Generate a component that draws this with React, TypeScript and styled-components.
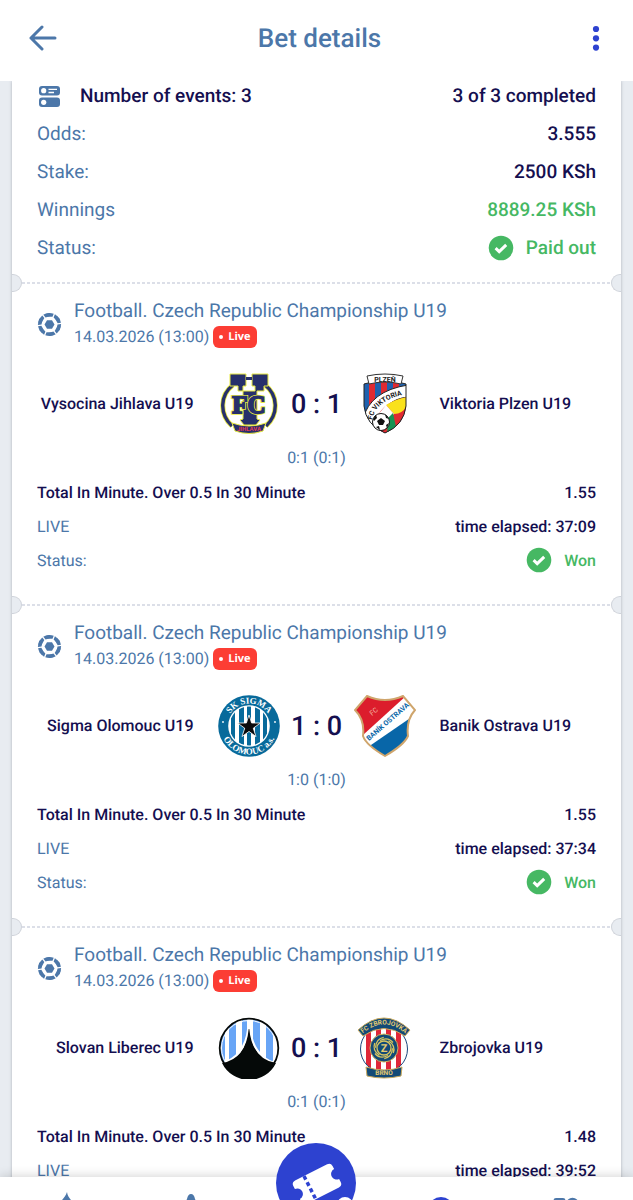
import React from 'react';
import styled, { createGlobalStyle } from 'styled-components';

const GlobalStyle = createGlobalStyle`
  * {
    box-sizing: border-box;
  }

  body {
    margin: 0;
    background: #e8ecf1;
    font-family: Roboto, 'Liberation Sans', sans-serif;
    text-rendering: geometricPrecision;
    color: #150f50;
  }
`;

const Shell = styled.div`
  height: 100vh;
  display: flex;
  flex-direction: column;
  overflow: hidden;
`;

const Header = styled.header`
  flex: 0 0 81px;
  padding: 0 17px 4px 23px;
  display: flex;
  align-items: center;
  justify-content: space-between;
  background: #fff;
`;

const Title = styled.h1`
  margin: 0;
  font-size: 26px;
  line-height: 32px;
  font-weight: 500;
  color: #4c77a9;
`;

const IconButton = styled.button`
  width: 40px;
  height: 40px;
  padding: 0;
  border: 0;
  background: none;
  display: flex;
  align-items: center;
  justify-content: center;
  cursor: pointer;
`;

const Content = styled.main`
  flex: 1 1 0;
  min-height: 0;
  overflow: hidden;
  padding: 0 12px;
`;

const Ticket = styled.article`
  background: #fff;
  box-shadow: 0 0 3px rgba(60, 70, 90, 0.35);
`;

const Summary = styled.dl`
  margin: 0;
  padding: 3px 25px 14px;
  display: grid;
  gap: 14px;
`;

const SummaryRow = styled.div`
  height: 24px;
  display: flex;
  align-items: center;
  justify-content: space-between;
  font-size: 19px;
  line-height: 24px;
`;

const Label = styled.dt<{ $strong?: boolean }>`
  display: flex;
  align-items: center;
  gap: 18px;
  font-weight: ${({ $strong }) => ($strong ? 500 : 400)};
  color: ${({ $strong }) => ($strong ? '#150f50' : '#4c77a9')};
`;

const Value = styled.dd<{ $win?: boolean }>`
  margin: 0;
  display: flex;
  align-items: center;
  gap: 12px;
  font-weight: 500;
  color: ${({ $win }) => ($win ? '#46b863' : '#150f50')};
`;

const Perforation = styled.div`
  height: 18px;
  display: flex;
  align-items: center;
`;

const Notch = styled.span<{ $side: 'left' | 'right' }>`
  width: 10px;
  height: 18px;
  background: #e8ecf1;
  border: 1px solid #cfd3da;
  border-${({ $side }) => $side}: 0;
  border-radius: ${({ $side }) => ($side === 'left' ? '0 9px 9px 0' : '9px 0 0 9px')};
`;

const Dashes = styled.span`
  flex: 1;
  height: 2px;
  background: repeating-linear-gradient(90deg, #dcdfe8 0 3px, transparent 3px 5px);
`;

const Leg = styled.section`
  height: 304px;
  padding: 6px 25px 0;
`;

const LegHead = styled.header`
  display: flex;
  align-items: center;
  gap: 12px;
`;

const League = styled.h2`
  margin: 0;
  font-size: 19px;
  line-height: 25px;
  font-weight: 400;
  color: #4c77a9;
`;

const Kickoff = styled.div`
  height: 27px;
  display: flex;
  align-items: center;
  gap: 4px;
  font-size: 16px;
  color: #4c77a9;
`;

const LiveBadge = styled.span`
  height: 22px;
  padding: 0 6px;
  display: flex;
  align-items: center;
  gap: 5px;
  border-radius: 6px;
  background: #fc3d34;
  color: #fff;
  font: 700 11px/22px 'Open Sans', sans-serif;

  &::before {
    content: '';
    width: 4px;
    height: 4px;
    border-radius: 50%;
    background: #fff;
  }
`;

const Match = styled.div`
  height: 76px;
  margin-top: 16px;
  display: grid;
  grid-template-columns: 1fr 62px 74px 62px 1fr;
  align-items: center;
`;

const Team = styled.strong<{ $home?: boolean }>`
  padding: ${({ $home }) => ($home ? '0 24px 0 0' : '0 0 0 24px')};
  font-size: 16px;
  line-height: 20px;
  font-weight: 500;
  text-align: ${({ $home }) => ($home ? 'right' : 'left')};
`;

const Score = styled.div`
  font-size: 27px;
  line-height: 32px;
  font-weight: 500;
  text-align: center;
`;

const Halves = styled.div`
  margin-top: 6px;
  font-size: 16px;
  line-height: 20px;
  text-align: center;
  color: #4c77a9;
`;

const Details = styled.dl`
  margin: 7px 0 0;
`;

const DetailRow = styled.div`
  height: 34px;
  display: flex;
  align-items: center;
  justify-content: space-between;
  font-size: 16px;
`;

const Nav = styled.nav`
  position: relative;
  flex: 0 0 23px;
  min-height: 0;
  height: 23px;
  padding: 0 5px 0 3px;
  display: grid;
  grid-template-columns: repeat(5, 1fr);
  align-items: start;
  background: #fff;
  box-shadow: 0 0 12px rgba(0, 0, 0, 0.2);
`;

const NavLink = styled.a`
  height: 80px;
  padding-top: 13px;
  display: flex;
  justify-content: center;
`;

const CouponButton = styled.button`
  width: 80px;
  height: 80px;
  margin-top: -34px;
  padding: 0;
  justify-self: center;
  border: 0;
  border-radius: 50%;
  background: #2d42d0;
  cursor: pointer;
`;

const CheckIcon = () => (
  <svg width="26" height="26" viewBox="0 0 26 26" aria-hidden="true">
    <circle cx="13" cy="13" r="12.3" fill="#46b863" />
    <path d="M7.6 13.2l3.6 3.4 7-6.8" fill="none" stroke="#fff" strokeWidth="3" />
  </svg>
);

const EventsIcon = () => (
  <svg width="25" height="24" viewBox="0 0 25 24" aria-hidden="true">
    <rect x="2" y="2" width="21" height="9.5" rx="3" fill="#4c77a9" />
    <rect x="2" y="13.5" width="21" height="9.5" rx="3" fill="#4c77a9" />
    <circle cx="6.7" cy="6.7" r="2.6" fill="#fff" />
    <circle cx="6.7" cy="18.3" r="2.6" fill="#fff" />
    <path d="M11.5 5.3h8.5M11.5 8.5h5.5" stroke="#fff" strokeWidth="1.3" />
  </svg>
);

const spokes = [0, 60, 120, 180, 240, 300];

const FootballIcon = () => (
  <svg width="25" height="25" viewBox="-12.5 -12.5 25 25" fill="#4c77a9" aria-hidden="true">
    <path d="M-2.5-4.3h5L5 0 2.5 4.3h-5L-5 0z" />
    {spokes.map((a) => (
      <g key={a} transform={`rotate(${a})`}>
        <path d="M-4.2-10.8A11.6 11.6 0 0 1 4.2-10.8L3-7.7h-6z" />
        <path d="M5.4-10.2A11.6 11.6 0 0 1 6.1-9.8L10-5.8 7.2-4.1 4.1-6.9z" transform="rotate(0)" />
      </g>
    ))}
  </svg>
);

const Vysocina = () => (
  <svg width="62" height="62" viewBox="0 0 62 62" role="img" aria-label="Vysocina Jihlava">
    <g fill="none">
      <path d="M15 12C2 22 1 41 14 53M47 12c13 10 14 29 1 41" stroke="#e9ea43" strokeWidth="5" />
      <path d="M15 12C2 22 1 41 14 53M47 12c13 10 14 29 1 41" stroke="#27306b" strokeWidth="3.4" />
    </g>
    <g fill="#27306b" stroke="#e9ea43" strokeWidth="1">
      <path d="M12 1h16v12h-3v5h12v-5h-3V1h16v12h-4v5h-7v28l3 1-4 5H26l-4-5 3-1V18h-5v-5h-8z" />
      <path d="M14 50q17 6 34 0l-3 8q-14 5-28 0z" />
    </g>
    <path d="M28 4h6v3h-6z" fill="#27306b" />
    <text x="31" y="40" textAnchor="middle" fontFamily="Liberation Serif, serif" fontWeight="700" fontSize="25" stroke="#e9ea43" strokeWidth="3.4">FC</text>
    <text x="31" y="40" textAnchor="middle" fontFamily="Liberation Serif, serif" fontWeight="700" fontSize="25" fill="#27306b" stroke="#27306b" strokeWidth="1.8" aria-hidden="true">FC</text>
    <text x="31" y="57.5" textAnchor="middle" fontFamily="Roboto, sans-serif" fontWeight="700" fontSize="6" fill="#e23a58">JIHLAVA</text>
  </svg>
);

const Viktoria = () => (
  <svg width="62" height="62" viewBox="0 0 62 62" role="img" aria-label="Viktoria Plzen">
    <defs>
      <clipPath id="vik">
        <path d="M10 11Q31 4 52 11V33Q50 52 31 60 12 52 10 33z" />
      </clipPath>
      <path id="vik-arc" d="M18 47Q22 26 54 21" />
    </defs>
    <g clipPath="url(#vik)">
      <path d="M8 0h46v62H8z" fill="#1f61ae" />
      <path d="M15 0h6v40h-6zM27 0h6v40h-6zM39 0h6v40h-6z" fill="#e02a31" />
      <path d="M9 46Q16 18 54 12v12Q30 26 20 54z" fill="#fff" stroke="#222" />
      <path d="M20 54Q24 29 54 24v38H20z" fill="#e02a31" />
      <path d="M32 32q10-6 22-8 0 16-14 17z" fill="#f9e11b" />
      <path d="M32 32l8 9-7 7-10-5z" fill="#fff" />
      <path d="M34 45l5-5 3 14-9 7z" fill="#179354" />
    </g>
    <path d="M10 11Q31 4 52 11V33Q50 52 31 60 12 52 10 33z" fill="none" stroke="#222" />
    <path d="M13 3Q31-1 49 3l-2 8Q31 7 15 11z" fill="#fff" stroke="#333" />
    <text x="31" y="8.5" textAnchor="middle" fontFamily="Roboto, sans-serif" fontWeight="700" fontSize="7" fill="#222">PLZEŇ</text>
    <text fontFamily="Roboto, sans-serif" fontWeight="700" fontSize="7" fill="#222">
      <textPath href="#vik-arc">FC VIKTORIA</textPath>
    </text>
    <circle cx="27" cy="49" r="8.5" fill="#fff" stroke="#111" />
    <path d="M27 45l4 3-2 4h-4l-2-4zM19 46l3-4 1 3-3 3zM31 41l4 5-3-1zM35 50l-2 5-1-3zM22 54l3-1 1 4z" fill="#111" />
  </svg>
);

const Sigma = () => (
  <svg width="62" height="62" viewBox="0 0 62 62" role="img" aria-label="Sigma Olomouc">
    <defs>
      <path id="sig-top" d="M8.5 31a22.5 22.5 0 0 1 45 0" />
      <path id="sig-bottom" d="M2.5 31a28.5 28.5 0 0 0 57 0" />
      <clipPath id="sig">
        <circle cx="31" cy="31" r="19.5" />
      </clipPath>
    </defs>
    <circle cx="31" cy="31" r="30.8" fill="#086a9b" />
    <circle cx="31" cy="31" r="20.8" fill="#fff" />
    <g clipPath="url(#sig)" fill="#086a9b">
      <path d="M13 10h4v42h-4zM21 10h5v42h-5zM29 10h4v42h-4zM37 10h5v42h-5zM45 10h4v42h-4z" />
    </g>
    <path d="M31 20l2.6 8h8.8l-7.1 5.2 2.7 8.4-7-5.2-7 5.2 2.7-8.4-7.1-5.2h8.8z" fill="#0b0b0d" stroke="#fff" strokeWidth=".8" />
    <g fontFamily="Liberation Serif, serif" fontWeight="700" fontSize="9" fill="#fff" textAnchor="middle">
      <text><textPath href="#sig-top" startOffset="50%">SK SIGMA</textPath></text>
      <text><textPath href="#sig-bottom" startOffset="50%">OLOMOUC a.s.</textPath></text>
    </g>
    <circle cx="5" cy="27" r=".9" fill="#fff" />
    <circle cx="57" cy="27" r=".9" fill="#fff" />
  </svg>
);

const Banik = () => (
  <svg width="62" height="62" viewBox="0 0 62 62" role="img" aria-label="Banik Ostrava">
    <defs>
      <clipPath id="ban">
        <path d="M13 1Q31 9 49 1L61 15Q52 25 54 41 50 50 31 61 12 50 9 41 11 25 1 15z" />
      </clipPath>
    </defs>
    <g clipPath="url(#ban)">
      <path d="M0 0h62v62H0z" fill="#fff" />
      <path d="M0 0h53L9 40H0z" fill="#dc1d2c" />
      <path d="M62 19v43H0l17-12z" fill="#0866a8" />
    </g>
    <path d="M13 1Q31 9 49 1L61 15Q52 25 54 41 50 50 31 61 12 50 9 41 11 25 1 15z" fill="none" stroke="#cfa56c" strokeWidth="2" />
    <text transform="translate(18 21) rotate(-40)" fontFamily="Roboto, sans-serif" fontSize="7" fill="#f3b3a0">FC</text>
    <text transform="translate(15 46) rotate(-41)" fontFamily="Roboto, sans-serif" fontWeight="700" fontSize="7" fill="#0866a8">BANÍK OSTRAVA</text>
  </svg>
);

const Slovan = () => (
  <svg width="62" height="62" viewBox="0 0 62 62" role="img" aria-label="Slovan Liberec">
    <defs>
      <clipPath id="slo">
        <circle cx="31" cy="31" r="29" />
      </clipPath>
    </defs>
    <circle cx="31" cy="31" r="29" fill="#fff" />
    <g clipPath="url(#slo)" fill="#68a5f6">
      <path d="M3 0h4v62H3zM11 0h7v62h-7zM24 0h5v62h-5zM35 0h7v62h-7zM48 0h7v62h-7z" />
      <path d="M0 48Q27 42 30.5 11h1Q35 42 62 48v14H0z" fill="#050908" stroke="#fff" strokeWidth="2.5" />
    </g>
    <circle cx="31" cy="31" r="27.5" fill="none" stroke="#fff" />
    <path d="M4 46Q28 42 30.7 12h.6Q34 42 58 46A30 30 0 0 1 4 46z" fill="#050908" />
    <circle cx="31" cy="31" r="29.3" fill="none" stroke="#050908" strokeWidth="1.8" />
  </svg>
);

const Zbrojovka = () => (
  <svg width="62" height="62" viewBox="0 0 62 62" role="img" aria-label="Zbrojovka Brno">
    <defs>
      <clipPath id="zbr">
        <circle cx="30" cy="32" r="23.5" />
      </clipPath>
      <path id="zbr-arc" d="M7 18Q30-3 53 18" />
    </defs>
    <circle cx="30" cy="32" r="23.5" fill="#fff" />
    <g clipPath="url(#zbr)" fill="#df2738">
      <path d="M12 5h5v54h-5zM22 5h5v54h-5zM32 5h5v54h-5zM42 5h5v54h-5z" />
    </g>
    <circle cx="30" cy="32" r="23.5" fill="none" stroke="#1c477c" />
    <path d="M4 13Q30-11 56 13l-5 6Q30 4 9 19z" fill="#124a77" stroke="#c9a95c" />
    <path d="M12 50q18 6 36 0l-1 9q-17 4-34 0z" fill="#124a77" stroke="#c9a95c" />
    <circle cx="30" cy="31" r="14" fill="#124a77" stroke="#d2b25e" />
    <g fill="none" stroke="#d8c560" strokeWidth="1.3">
      {spokes.map((a) => (
        <path key={a} transform={`rotate(${a} 30 31)`} d="M26 23.5q8-4 13 2" />
      ))}
      <circle cx="30" cy="31" r="7" />
    </g>
    <g fontFamily="Roboto, sans-serif" fontWeight="700" fill="#e5ca70" textAnchor="middle">
      <text x="30" y="35" fontSize="11">Z</text>
      <text x="30" y="58" fontSize="6.5">BRNO</text>
      <text fontSize="6.5"><textPath href="#zbr-arc" startOffset="50%">FC ZBROJOVKA</textPath></text>
    </g>
  </svg>
);

const legs = [
  {
    home: 'Vysocina Jihlava U19',
    away: 'Viktoria Plzen U19',
    HomeCrest: Vysocina,
    AwayCrest: Viktoria,
    score: '0 : 1',
    halves: '0:1 (0:1)',
    odds: '1.55',
    elapsed: '37:09',
  },
  {
    home: 'Sigma Olomouc U19',
    away: 'Banik Ostrava U19',
    HomeCrest: Sigma,
    AwayCrest: Banik,
    score: '1 : 0',
    halves: '1:0 (1:0)',
    odds: '1.55',
    elapsed: '37:34',
  },
  {
    home: 'Slovan Liberec U19',
    away: 'Zbrojovka U19',
    HomeCrest: Slovan,
    AwayCrest: Zbrojovka,
    score: '0 : 1',
    halves: '0:1 (0:1)',
    odds: '1.48',
    elapsed: '39:52',
  },
];

const BetLeg: React.FC<{ leg: (typeof legs)[number] }> = ({ leg }) => {
  const { HomeCrest, AwayCrest } = leg;

  return (
    <>
      <Perforation>
        <Notch $side="left" />
        <Dashes />
        <Notch $side="right" />
      </Perforation>
      <Leg>
        <LegHead>
          <FootballIcon />
          <div>
            <League>Football. Czech Republic Championship U19</League>
            <Kickoff>
              14.03.2026 (13:00) <LiveBadge>Live</LiveBadge>
            </Kickoff>
          </div>
        </LegHead>
        <Match>
          <Team $home>{leg.home}</Team>
          <HomeCrest />
          <Score>{leg.score}</Score>
          <AwayCrest />
          <Team>{leg.away}</Team>
        </Match>
        <Halves>{leg.halves}</Halves>
        <Details>
          <DetailRow>
            <Label $strong>Total In Minute. Over 0.5 In 30 Minute</Label>
            <Value>{leg.odds}</Value>
          </DetailRow>
          <DetailRow>
            <Label>LIVE</Label>
            <Value>time elapsed: {leg.elapsed}</Value>
          </DetailRow>
          <DetailRow>
            <Label>Status:</Label>
            <Value $win>
              <CheckIcon /> Won
            </Value>
          </DetailRow>
        </Details>
      </Leg>
    </>
  );
};

const App: React.FC = () => (
  <>
    <GlobalStyle />
    <Shell>
      <Header>
        <IconButton aria-label="Back">
          <svg width="30" height="28" viewBox="0 0 30 28" fill="none" stroke="#4c77a9" strokeWidth="3" strokeLinecap="round" strokeLinejoin="round">
            <path d="M14 2L3 13l11 11M3 13h24" />
          </svg>
        </IconButton>
        <Title>Bet details</Title>
        <IconButton aria-label="More options">
          <svg width="8" height="28" viewBox="0 0 8 28" fill="#2d42d0">
            <circle cx="4" cy="4" r="3.1" />
            <circle cx="4" cy="13.3" r="3.1" />
            <circle cx="4" cy="22.6" r="3.1" />
          </svg>
        </IconButton>
      </Header>
      <Content>
        <Ticket>
          <Summary>
            <SummaryRow>
              <Label $strong>
                <EventsIcon /> Number of events: 3
              </Label>
              <Value>3 of 3 completed</Value>
            </SummaryRow>
            <SummaryRow>
              <Label>Odds:</Label>
              <Value>3.555</Value>
            </SummaryRow>
            <SummaryRow>
              <Label>Stake:</Label>
              <Value>2500 KSh</Value>
            </SummaryRow>
            <SummaryRow>
              <Label>Winnings</Label>
              <Value $win>8889.25 KSh</Value>
            </SummaryRow>
            <SummaryRow>
              <Label>Status:</Label>
              <Value $win>
                <CheckIcon /> Paid out
              </Value>
            </SummaryRow>
          </Summary>
          {legs.map((leg) => (
            <BetLeg key={leg.home} leg={leg} />
          ))}
        </Ticket>
      </Content>
      <Nav>
        <NavLink href="#popular" aria-label="Popular">
          <svg width="28" height="32" viewBox="0 0 28 32" fill="#4c77a9">
            <path d="M15 2c1 8 9 10 9 19a10 10 0 0 1-20 0C4 13 12 11 15 2z" />
          </svg>
        </NavLink>
        <NavLink href="#favorites" aria-label="Favorites">
          <svg width="28" height="32" viewBox="0 0 28 32" fill="#4c77a9">
            <path d="M14 4q3 0 4 5l2 4 7 1-6 7 2 9-9-5-9 5 2-9-6-7 7-1 2-4q1-5 4-5z" />
          </svg>
        </NavLink>
        <CouponButton aria-label="Coupon">
          <svg width="80" height="80" viewBox="0 0 80 80">
            <g transform="translate(41 41) rotate(-27)">
              <path d="M-18-13h36q4 0 4 4v3.500a5.500 5.500 0 0 0 0 11V9q0 4-4 4h-36q-4 0-4-4V5.500a5.500 5.500 0 0 0 0-11V-9q0-4 4-4z" fill="#fff" />
              <path d="M-8-13V14" stroke="#2d42d0" strokeWidth="3.5" strokeDasharray="4 3" />
            </g>
            <circle cx="69" cy="62" r="8" fill="#fff" />
          </svg>
        </CouponButton>
        <NavLink href="#history" aria-label="History">
          <svg width="28" height="34" viewBox="0 0 28 34">
            <circle cx="14" cy="20" r="13" fill="#2d42d0" />
          </svg>
        </NavLink>
        <NavLink href="#menu" aria-label="Menu">
          <svg width="28" height="34" viewBox="0 0 28 34" fill="none" stroke="#4c77a9" strokeWidth="3">
            <rect x="3" y="9.5" width="9" height="9" rx="1" />
            <circle cx="20.5" cy="14" r="4.8" />
          </svg>
        </NavLink>
      </Nav>
    </Shell>
  </>
);

export default App;
